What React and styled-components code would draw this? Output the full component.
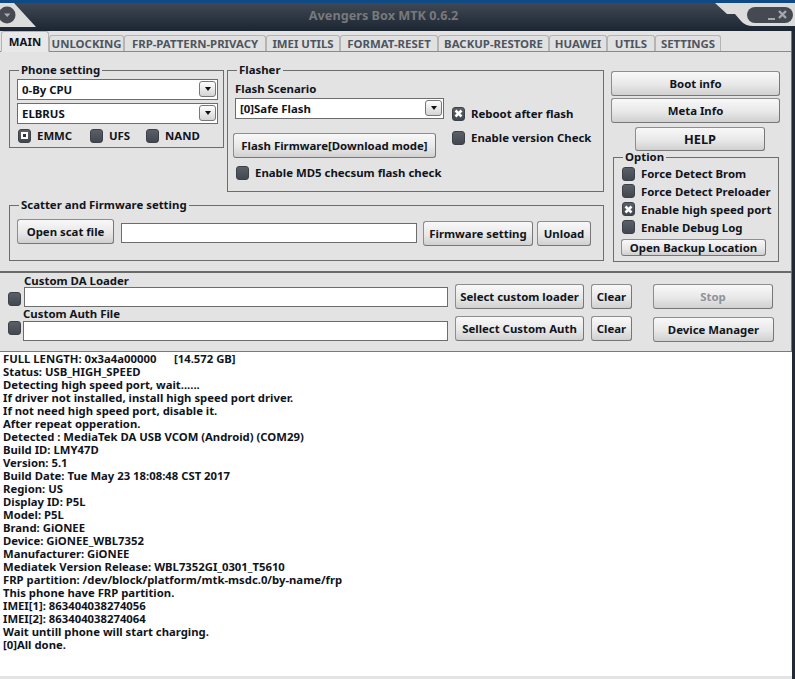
import React from 'react';
import styled, { createGlobalStyle } from 'styled-components';

const Global = createGlobalStyle`
  html, body {
    margin: 0;
    padding: 0;
    background: #fff;
  }
  * {
    box-sizing: border-box;
  }
`;

const FONT = `"Noto Sans", "Open Sans", sans-serif`;

const Window = styled.div`
  width: 795px;
  height: 679px;
  overflow: hidden;
  display: flex;
  flex-direction: column;
  font: 700 11.4px ${FONT};
  color: #10141c;
  background: #fff;
`;

const TitleBar = styled.div`
  position: relative;
  height: 31px;
  flex: none;
  border-top: 3px solid #0d4a86;
  background: linear-gradient(#3f4853, #1c2632);
  display: flex;
  align-items: center;
  justify-content: center;
  padding: 0 28px 4px 0;
`;

const Title = styled.div`
  color: #77797c;
  font-size: 12.7px;
`;

const CornerSvg = styled.svg`
  position: absolute;
  top: 0;
  ${(p) => (p.$right ? 'right: 0;' : 'left: 0;')}
`;

const Content = styled.div`
  flex: 1;
  min-height: 0;
  display: flex;
  flex-direction: column;
  border-right: 3px solid #222b35;
`;

const Upper = styled.div`
  height: 242px;
  flex: none;
  background: #e3e3e3;
  border-right: 1px solid #777;
  border-bottom: 2px solid #6a6a6a;
  display: flex;
  flex-direction: column;
`;

const Tabs = styled.div`
  height: 21px;
  flex: none;
  display: flex;
  align-items: flex-end;
  padding-left: 1px;
  border-bottom: 1px solid #8a8a8a;
`;

const Tab = styled.div`
  width: ${(p) => p.$w}px;
  height: ${(p) => (p.$active ? '21px' : '16px')};
  margin-bottom: ${(p) => (p.$active ? '-1px' : '0')};
  display: flex;
  align-items: center;
  justify-content: center;
  white-space: nowrap;
  color: ${(p) => (p.$active ? '#10141c' : '#4d5560')};
  background: ${(p) => (p.$active ? '#e8e8e8' : '#e1e1e1')};
  border: 1px solid #b4b4b4;
  border-bottom: ${(p) => (p.$active ? '1px solid #e8e8e8' : 'none')};
  border-radius: 3px 3px 0 0;
`;

const Body = styled.div`
  display: flex;
  padding: 11px 0 0 9px;
  gap: 7px;
`;

const LeftCol = styled.div`
  width: 595px;
  display: flex;
  flex-direction: column;
  gap: 6px;
`;

const TopRow = styled.div`
  display: flex;
  gap: 3px;
  align-items: flex-start;
`;

const Group = styled.fieldset`
  margin: ${(p) => p.$m || '0'};
  min-width: 0;
  width: ${(p) => p.$w}px;
  height: ${(p) => p.$h}px;
  padding: ${(p) => p.$pad || '0 5px 0 7px'};
  border: 1px solid #6d6d6d;
  display: flex;
  flex-direction: column;

  legend {
    padding: 0 2px;
    margin-left: ${(p) => p.$lm || 2}px;
    line-height: 14px;
  }
`;

const Select = styled.div`
  height: 21px;
  width: ${(p) => p.$w || 'auto'};
  background: #fff;
  border: 1px solid #6d6d6d;
  display: flex;
  align-items: center;
  justify-content: space-between;
  padding: 0 1px 1px 4px;
`;

const Arrow = styled.span`
  width: 17px;
  height: 16px;
  border: 1px solid #777;
  border-radius: 3px;
  background: linear-gradient(#fff, #d4d4d4);
  display: flex;
  align-items: center;
  justify-content: center;

  &::after {
    content: '';
    border-left: 3.5px solid transparent;
    border-right: 3.5px solid transparent;
    border-top: 4px solid #111;
  }
`;

const Stack = styled.div`
  display: flex;
  flex-direction: column;
  gap: ${(p) => p.$gap || 3}px;
  margin-top: ${(p) => p.$mt || 0}px;
`;

const RadioRow = styled.div`
  display: flex;
  margin-top: 4px;
  padding-left: 1px;
`;

const CheckWrap = styled.div`
  display: flex;
  align-items: center;
  gap: 6px;
  white-space: nowrap;
  width: ${(p) => (p.$w ? `${p.$w}px` : 'auto')};
  height: ${(p) => (p.$h ? `${p.$h}px` : 'auto')};
  margin-left: ${(p) => p.$ml || 0}px;
`;

const Box = styled.span`
  width: 13px;
  height: 14px;
  flex: none;
  border-radius: 3px;
  background: linear-gradient(#5b6068, #43474f);
  border: 1px solid #3c4048;
  display: inline-flex;
  align-items: center;
  justify-content: center;
  margin-bottom: ${(p) => p.$mb || 0}px;
`;

const Dot = styled.span`
  width: 7px;
  height: 7px;
  background: #fff;
  display: flex;
  align-items: center;
  justify-content: center;

  &::after {
    content: '';
    width: 3px;
    height: 3px;
    background: #333;
  }
`;

const Btn = styled.div`
  width: ${(p) => p.$w}px;
  height: ${(p) => p.$h || 25}px;
  flex: none;
  margin: ${(p) => p.$m || '0'};
  display: flex;
  align-items: center;
  justify-content: center;
  border: 1px solid #8d8d8d;
  border-bottom-color: #777;
  border-right-color: #777;
  border-radius: 3px;
  background: linear-gradient(#f8f8f8, #e8e8e8 55%, #d0d0d0);
  color: ${(p) => (p.$off ? '#8e9298' : '#10141c')};
  font-size: ${(p) => p.$fs || 11.4}px;
  white-space: nowrap;
`;

const Field = styled.div`
  height: ${(p) => p.$h || 20}px;
  background: #fff;
  border: 1px solid #6d6d6d;
  margin-top: ${(p) => p.$mt || 0}px;
`;

const WideField = styled(Field)`
  flex: 1;
`;

const FlashRow = styled.div`
  display: flex;
  margin-top: 2px;
`;

const SmallLabel = styled.div`
  line-height: 14px;
  margin-top: 5px;
`;

const Flags = styled.div`
  display: flex;
  flex-direction: column;
  gap: 9px;
  margin: 8px 0 0 8px;
`;

const ScatterRow = styled.div`
  display: flex;
  align-items: flex-start;
  margin-top: 7px;
  gap: 6px;
`;

const RightCol = styled.div`
  width: 169px;
  margin-top: 8px;
  display: flex;
  flex-direction: column;
  align-items: flex-start;
  gap: 2px;
`;

const OptionBody = styled.div`
  display: flex;
  flex-direction: column;
  align-items: flex-start;
  padding-top: 1px;
`;

const Custom = styled.div`
  height: 79px;
  flex: none;
  background: #e3e3e3;
  border-right: 1px solid #777;
  border-bottom: 1px solid #7a7a7a;
  display: flex;
  padding: 2px 0 0 8px;
`;

const CustomLeft = styled.div`
  width: 440px;
  display: flex;
  flex-direction: column;
  gap: 1px;
`;

const CustomRow = styled.div`
  display: flex;
  align-items: flex-end;
  gap: ${(p) => p.$gap}px;
`;

const CustomField = styled.div`
  flex: 1;
  display: flex;
  flex-direction: column;
`;

const CustomLabel = styled.div`
  line-height: 12px;
  height: ${(p) => p.$h}px;
`;

const CustomBtns = styled.div`
  margin-left: 7px;
  padding-top: 9px;
  display: grid;
  grid-template-columns: 129px 41px 141px;
  grid-auto-rows: 25px;
  column-gap: 7px;
  row-gap: 7px;
`;

const Log = styled.pre`
  margin: 0;
  padding: 0 0 0 3px;
  flex: 1;
  background: #fff;
  border-bottom: 3px solid #e3e3e3;
  font: 700 11.3px/13px ${FONT};
  color: #10141c;
`;

const TABS = [
  ['MAIN', 48],
  ['UNLOCKING', 75],
  ['FRP-PATTERN-PRIVACY', 142],
  ['IMEI UTILS', 74],
  ['FORMAT-RESET', 98],
  ['BACKUP-RESTORE', 111],
  ['HUAWEI', 58],
  ['UTILS', 48],
  ['SETTINGS', 66],
];

const LOG = `FULL LENGTH: 0x3a4a00000      [14.572 GB]
Status: USB_HIGH_SPEED
Detecting high speed port, wait......
If driver not installed, install high speed port driver.
If not need high speed port, disable it.
After repeat opperation.
Detected : MediaTek DA USB VCOM (Android) (COM29)
Build ID: LMY47D
Version: 5.1
Build Date: Tue May 23 18:08:48 CST 2017
Region: US
Display ID: P5L
Model: P5L
Brand: GiONEE
Device: GiONEE_WBL7352
Manufacturer: GiONEE
Mediatek Version Release: WBL7352GI_0301_T5610
FRP partition: /dev/block/platform/mtk-msdc.0/by-name/frp
This phone have FRP partition.
IMEI[1]: 863404038274056
IMEI[2]: 863404038274064
Wait untill phone will start charging.
[0]All done.`;

const Cross = () => (
  <svg width="9" height="9" viewBox="0 0 9 9">
    <path d="M1.5 1.5 L7.5 7.5 M7.5 1.5 L1.5 7.5" stroke="#fff" strokeWidth="2.6" />
  </svg>
);

const Check = ({ mark, label, w, h, ml }) => (
  <CheckWrap $w={w} $h={h} $ml={ml}>
    <Box>{mark === 'x' ? <Cross /> : mark === 'dot' ? <Dot /> : null}</Box>
    {label}
  </CheckWrap>
);

export default function App() {
  return (
    <Window>
      <Global />
      <TitleBar>
        <CornerSvg width="40" height="28" viewBox="0 0 40 28">
          <path d="M0 0 H14 L36 24 H0 Z" fill="#dcdcdc" />
          <circle cx="7" cy="12" r="8.5" fill="#454a52" />
          <path d="M4 10.5 H10.5 L7.2 14 Z" fill="#aaadb2" />
        </CornerSvg>
        <Title>Avengers Box MTK 0.6.2</Title>
        <CornerSvg $right width="80" height="28" viewBox="0 0 80 28">
          <path d="M0 0 H80 V23 H38 Q30 23 26 18 L20 11 H12 Z" fill="#dcdcdc" />
          <rect x="32" y="4" width="46" height="16" rx="8" fill="#454a52" />
          <path d="M53 16 H60" stroke="#a4a7ac" strokeWidth="2" />
          <path d="M64 8 L71 15 M71 8 L64 15" stroke="#a4a7ac" strokeWidth="2.4" />
        </CornerSvg>
      </TitleBar>

      <Content>
        <Upper>
          <Tabs>
            {TABS.map(([t, w], i) => (
              <Tab key={t} $w={w} $active={i === 0}>{t}</Tab>
            ))}
          </Tabs>
          <Body>
            <LeftCol>
              <TopRow>
                <Group $w={215} $h={85}>
                  <legend>Phone setting</legend>
                  <Stack $mt={2}>
                    <Select>0-By CPU<Arrow /></Select>
                    <Select>ELBRUS<Arrow /></Select>
                  </Stack>
                  <RadioRow>
                    <Check mark="dot" label="EMMC" w={72} />
                    <Check label="UFS" w={56} />
                    <Check label="NAND" />
                  </RadioRow>
                </Group>
                <Group $w={377} $h={129}>
                  <legend>Flasher</legend>
                  <SmallLabel>Flash Scenario</SmallLabel>
                  <FlashRow>
                    <Stack $gap={14}>
                      <Select $w="209px">[0]Safe Flash<Arrow /></Select>
                      <Btn $w={203} $m="0 0 0 -2px">Flash Firmware[Download mode]</Btn>
                    </Stack>
                    <Flags>
                      <Check mark="x" label="Reboot after flash" />
                      <Check label="Enable version Check" />
                    </Flags>
                  </FlashRow>
                  <Stack $mt={7}>
                    <Check label="Enable MD5 checsum flash check" ml={1} />
                  </Stack>
                </Group>
              </TopRow>
              <Group $w={595} $h={63} $pad="0 12px 0 7px">
                <legend>Scatter and Firmware setting</legend>
                <ScatterRow>
                  <Btn $w={97} $m="0 1px 0 0">Open scat file</Btn>
                  <WideField $mt={4} />
                  <Btn $w={110} $m="2px -2px 0 0">Firmware setting</Btn>
                  <Btn $w={54} $m="2px 0 0 0">Unload</Btn>
                </ScatterRow>
              </Group>
            </LeftCol>
            <RightCol>
              <Btn $w={169}>Boot info</Btn>
              <Btn $w={169}>Meta Info</Btn>
              <Btn $w={130} $h={24} $fs={12.8} $m="2px 0 0 24px">HELP</Btn>
              <Group $w={166} $h={112} $pad="0 5px 0 8px" $lm={1} $m="-3px 0 0 2px">
                <legend>Option</legend>
                <OptionBody>
                  <Check label="Force Detect Brom" h={17} />
                  <Check label="Force Detect Preloader" h={18} />
                  <Check mark="x" label="Enable high speed port" h={18} />
                  <Check label="Enable Debug Log" h={18} />
                  <Btn $w={145} $h={17} $m="3px 0 0 -1px">Open Backup Location</Btn>
                </OptionBody>
              </Group>
            </RightCol>
          </Body>
        </Upper>

        <Custom>
          <CustomLeft>
            <CustomRow $gap={3}>
              <Box $mb={1} />
              <CustomField>
                <CustomLabel $h={12}>Custom DA Loader</CustomLabel>
                <Field />
              </CustomField>
            </CustomRow>
            <CustomRow $gap={2}>
              <Box $mb={6} />
              <CustomField>
                <CustomLabel $h={13}>Custom Auth File</CustomLabel>
                <Field />
              </CustomField>
            </CustomRow>
          </CustomLeft>
          <CustomBtns>
            <Btn $w={129}>Select custom loader</Btn>
            <Btn $w={41}>Clear</Btn>
            <Btn $w={120} $off $m="0 0 0 14px">Stop</Btn>
            <Btn $w={129}>Sellect Custom Auth</Btn>
            <Btn $w={41}>Clear</Btn>
            <Btn $w={121} $m="1px 0 0 14px">Device Manager</Btn>
          </CustomBtns>
        </Custom>

        <Log>{LOG}</Log>
      </Content>
    </Window>
  );
}
